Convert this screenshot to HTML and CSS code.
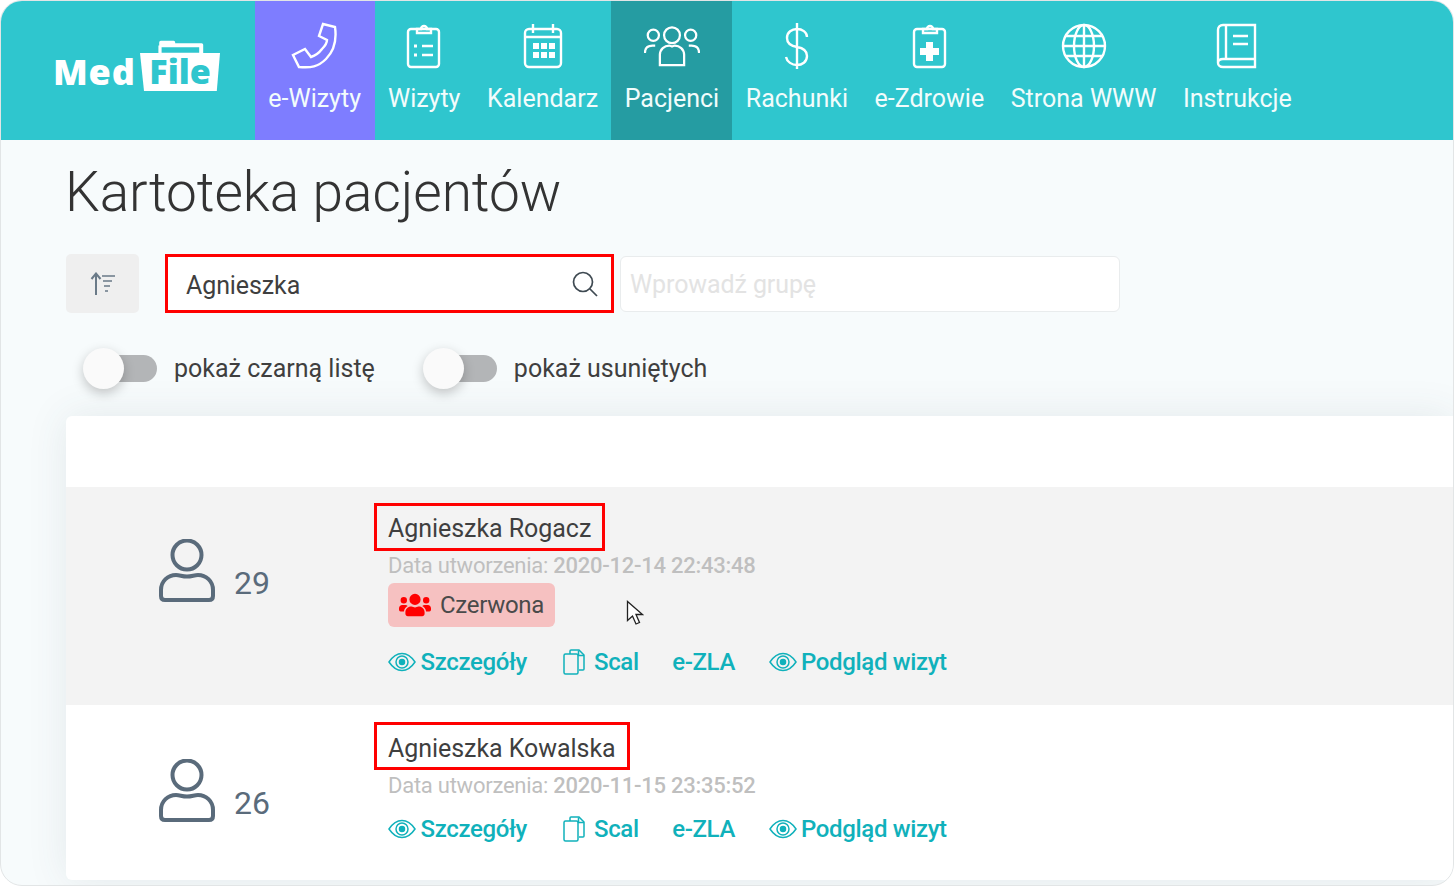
FILE: index.html
```html
<!DOCTYPE html>
<html lang="pl">
<head>
  <meta charset="UTF-8" />
  <meta name="viewport" content="width=device-width, initial-scale=1" />
  <title>Kartoteka pacjentów</title>
  <link rel="stylesheet" href="styles.css">
</head>
<body>
  <svg class="defs" width="0" height="0">
    <symbol id="eye" viewBox="0 0 28 20">
      <path d="M1 10C5 4 9 1.500 14 1.500S23 4 27 10c-4 6-8 8.500-13 8.500S5 16 1 10z" />
      <circle cx="14" cy="10" r="6" />
      <circle class="dot" cx="14" cy="10" r="2.500" fill="#10b1bb" />
    </symbol>
    <symbol id="copy" viewBox="0 0 22 26">
      <path d="M7 5V2a1 1 0 0 1 1-1h8l5 5v14a1 1 0 0 1-1 1h-4" />
      <path d="M15.500 1.500V6.500H21" />
      <rect x="1" y="5" width="14" height="20" rx="1.500" />
    </symbol>
    <symbol id="user" viewBox="0 0 58 64">
      <circle cx="29" cy="16" r="14.500" />
      <path d="M3 57V51c0-9 7-15 15-15 4 0 6 1.500 11 1.500S36 36 40 36c8 0 15 6 15 15v6q0 4-4 4H7q-4 0-4-4z" />
    </symbol>
  </svg>

  <div class="app">
    <header class="topbar">
      <a class="logo">
        <span class="logo-med">Med</span>
        <span class="logo-folder">
          <svg class="folder-tab" viewBox="0 0 68 20"><path d="M7 18V7h1V3q0-2 2-2h16q2 0 2 2v1h33q2 0 2 2v12zM11 9v7h47V9z" /></svg>
          <span class="logo-file">File</span>
        </span>
      </a>
      <nav class="menu">
        <a class="menu-item purple">
          <svg viewBox="0 0 48 48"><path d="M32 2l12 3c2 14-1 24-9 32S20 46 8 45L2 33l12-6 6 8c3-1 8-4 11-8 3-3 5-6 5-9l-8-4z" /></svg>
          <span>e-Wizyty</span>
        </a>
        <a class="menu-item">
          <svg viewBox="0 0 48 48"><rect x="8" y="7" width="31" height="38" rx="3" /><path d="M17 7h4a3 3 0 1 1 6 0h4v4H17zM22 24h11M22 33h11" /><path class="thick" d="M14 24h3M14 33h3" /></svg>
          <span>Wizyty</span>
        </a>
        <a class="menu-item">
          <svg viewBox="0 0 48 48"><rect x="6" y="7" width="36" height="38" rx="4" /><path d="M6 15h36M14 2v9M34 2v9" /><path class="fill" d="M14 21h6v6h-6zM22 21h6v6h-6zM30 21h6v6h-6zM14 30h6v6h-6zM22 30h6v6h-6zM30 30h6v6h-6z" /></svg>
          <span>Kalendarz</span>
        </a>
        <a class="menu-item dark">
          <svg class="wide" viewBox="0 -2 60 51"><circle cx="30" cy="12" r="8.500" /><circle cx="10" cy="12" r="6" /><circle cx="50" cy="12" r="6" /><path d="M1 31c0-5 3-8 8-8h3M59 31c0-5-3-8-8-8h-3M17 44V33c0-6 5-10 10-10 2 0 2 1 3 1s1-1 3-1c5 0 10 4 10 10v11z" /></svg>
          <span>Pacjenci</span>
        </a>
        <a class="menu-item">
          <svg viewBox="0 0 48 48"><path d="M34 15c0-5-5-8-10-8s-10 3-10 9c0 5 4 8 10 9 6 1 10 4 10 9 0 6-5 9-10 9s-10-3-11-8M24 1v46" /></svg>
          <span>Rachunki</span>
        </a>
        <a class="menu-item">
          <svg viewBox="0 0 48 48"><rect x="9" y="7" width="31" height="38" rx="3" /><path d="M18 7h4a3 3 0 1 1 6 0h4v4H18z" /><path class="fill" d="M21 20h7v6h6v7h-6v6h-7v-6h-6v-7h6z" /></svg>
          <span>e-Zdrowie</span>
        </a>
        <a class="menu-item">
          <svg viewBox="0 0 48 48"><circle cx="24" cy="24" r="21" /><ellipse cx="24" cy="24" rx="10" ry="21" /><path d="M24 3v42M3 24h42M6 14h36M6 34h36" /></svg>
          <span>Strona WWW</span>
        </a>
        <a class="menu-item">
          <svg viewBox="0 0 48 48"><path d="M10 3h32v34H10c-3 0-5 1.500-5 4V8c0-3 2-5 5-5zM13 3v34M5 41c0 2 2 4 5 4h32v-8" /><path d="M20 14h15M20 22h15" /></svg>
          <span>Instrukcje</span>
        </a>
      </nav>
    </header>

    <main class="content">
      <h1>Kartoteka pacjentów</h1>

      <div class="filters">
        <button class="sort-btn">
          <svg viewBox="0 0 26 24"><path d="M6 23V2M1.500 7L6 1.500 10.500 7" /><path class="thin" d="M12 4h13M13 9h9M14 14h6M15 19h3" /></svg>
        </button>
        <div class="search-box">
          <input class="search-input" type="text" value="Agnieszka" />
          <svg viewBox="0 0 26 26"><circle cx="11" cy="11" r="9.500" /><path d="M18 18l7 7" /></svg>
        </div>
        <input class="group-input" type="text" placeholder="Wprowadź grupę" />
      </div>

      <div class="toggles">
        <label class="toggle"><span class="switch"><span class="knob"></span></span>pokaż czarną listę</label>
        <label class="toggle"><span class="switch"><span class="knob"></span></span>pokaż usuniętych</label>
      </div>

      <section class="card">
        <div class="card-head"></div>

        <article class="patient striped">
          <div class="patient-age">
            <svg class="user-icon"><use href="#user" /></svg>
            <span>29</span>
          </div>
          <div class="patient-info">
            <div class="name">Agnieszka Rogacz</div>
            <div class="created">Data utworzenia: <b>2020-12-14 22:43:48</b></div>
            <div class="tag">
              <svg viewBox="0 0 640 512"><path d="M96 224a64 64 0 1 0 0-128 64 64 0 0 0 0 128zm448 0a64 64 0 1 0 0-128 64 64 0 0 0 0 128zm32 32h-64c-17.600 0-33.500 7.100-45.100 18.600 40.300 22.100 68.900 62 75.100 109.400h66c17.700 0 32-14.300 32-32v-32c0-35.300-28.700-64-64-64zm-256 0a112 112 0 1 0 0-224 112 112 0 0 0 0 224zm76.800 32h-8.300c-20.800 10-43.900 16-68.500 16s-47.600-6-68.500-16h-8.300C179.600 288 128 339.600 128 403.200V432c0 26.500 21.500 48 48 48h288c26.500 0 48-21.500 48-48v-28.800c0-63.600-51.600-115.200-115.200-115.200zm-223.700-13.400C161.500 263.100 145.600 256 128 256H64c-35.300 0-64 28.700-64 64v32c0 17.700 14.300 32 32 32h65.900c6.300-47.400 34.900-87.300 75.200-109.400z" /></svg>
              <span>Czerwona</span>
            </div>
            <div class="actions">
              <a class="action"><svg class="eye"><use href="#eye" /></svg>Szczegóły</a>
              <a class="action"><svg class="copy"><use href="#copy" /></svg>Scal</a>
              <a class="action">e-ZLA</a>
              <a class="action"><svg class="eye"><use href="#eye" /></svg>Podgląd wizyt</a>
            </div>
          </div>
          <svg class="cursor" viewBox="0 0 18 26"><path d="M1.500 1.500v19l5-4.500 3.500 8 3.500-1.500-3.500-8h6.500z" /></svg>
        </article>

        <article class="patient second">
          <div class="patient-age">
            <svg class="user-icon"><use href="#user" /></svg>
            <span>26</span>
          </div>
          <div class="patient-info">
            <div class="name">Agnieszka Kowalska</div>
            <div class="created">Data utworzenia: <b>2020-11-15 23:35:52</b></div>
            <div class="actions">
              <a class="action"><svg class="eye"><use href="#eye" /></svg>Szczegóły</a>
              <a class="action"><svg class="copy"><use href="#copy" /></svg>Scal</a>
              <a class="action">e-ZLA</a>
              <a class="action"><svg class="eye"><use href="#eye" /></svg>Podgląd wizyt</a>
            </div>
          </div>
        </article>
      </section>
    </main>
  </div>
</body>
</html>
```

FILE: styles.css
```css
* {
  box-sizing: border-box;
}

html, body {
  margin: 0;
  height: 100%;
  background: #fff;
}

body {
  font-family: Roboto, sans-serif;
  color: #3f3f3f;
  overflow: hidden;
}

.defs {
  position: absolute;
}

.app {
  height: 886px;
  border: 1px solid #e2e5e6;
  border-radius: 22px;
  overflow: hidden;
  background: #f7fbfc;
}

/* top bar */
.topbar {
  height: 139px;
  background: #2fc6ce;
  display: flex;
  align-items: stretch;
}

.logo {
  width: 254px;
  display: flex;
  align-items: flex-start;
  padding: 39px 0 0 52px;
  color: #fff;
  position: relative;
}

.logo-med {
  font-family: "Open Sans", sans-serif;
  font-weight: 800;
  font-size: 36px;
  letter-spacing: 0.8px;
  line-height: 1;
  margin-top: 14px;
}

.logo-folder {
  position: absolute;
  left: 139px;
  top: 39px;
  width: 82px;
  height: 52px;
}

.folder-tab {
  position: absolute;
  left: 0;
  top: 0;
  width: 80px;
  height: 16px;
  fill: #fff;
}

.logo-file {
  position: absolute;
  left: 0;
  top: 13px;
  width: 80px;
  height: 38px;
  background: #fff;
  color: #2fc6ce;
  font-family: "Open Sans", sans-serif;
  font-weight: 800;
  font-size: 34px;
  line-height: 36px;
  text-align: center;
  clip-path: polygon(0 0, 100% 0, 96% 100%, 5% 100%);
}

.menu {
  display: flex;
  align-items: stretch;
}

.menu-item {
  display: flex;
  flex-direction: column;
  align-items: center;
  padding: 21px 13.300px 0;
  color: #f2fcfc;
  font-size: 25px;
  font-weight: 400;
  white-space: nowrap;
}

.menu-item.purple {
  background: #7e7dff;
  padding-right: 13.700px;
}

.menu-item.dark {
  background: #259ca2;
}

.menu-item svg {
  width: 48px;
  height: 48px;
  margin-bottom: 14px;
  fill: none;
  stroke: #fff;
  stroke-width: 2.400;
}

.menu-item svg.wide {
  width: 56px;
}

.menu-item svg .fill,
.menu-item svg .thick {
  fill: #fff;
  stroke: none;
}

.menu-item svg .thick {
  stroke: #fff;
  stroke-width: 3;
}

/* page */
.content {
  padding: 0 0 0 65px;
}

h1 {
  margin: 0 0 0 -1px;
  padding-top: 22px;
  font-size: 55px;
  line-height: 60px;
  font-weight: 300;
  letter-spacing: -0.05px;
  color: #333;
}

.filters {
  display: flex;
  align-items: flex-start;
  margin-top: 32px;
  height: 60px;
}

.sort-btn {
  width: 73px;
  height: 59px;
  background: #efefef;
  border: 0;
  border-radius: 5px;
  padding: 0;
  display: flex;
  align-items: center;
  justify-content: center;
}

.sort-btn svg {
  width: 26px;
  height: 24px;
  fill: none;
  stroke: #6a7a88;
  stroke-width: 2;
}

.sort-btn svg .thin {
  stroke-width: 1.600;
}

.search-box {
  width: 449px;
  height: 59px;
  margin-left: 26px;
  border: 3px solid #f00;
  background: #fff;
  display: flex;
  align-items: center;
  padding: 0 13px 0 18px;
}

.search-box svg {
  width: 26px;
  height: 26px;
  flex: none;
  fill: none;
  stroke: #3f4a52;
  stroke-width: 1.700;
}

.search-input {
  flex: 1;
  min-width: 0;
  border: 0;
  outline: 0;
  padding: 3px 0 0;
  background: none;
  font: 400 25px Roboto, sans-serif;
  letter-spacing: -0.1px;
  color: #3f3f3f;
}

.group-input {
  width: 500px;
  height: 56px;
  margin: 2px 0 0 6px;
  border: 1px solid #e9eced;
  border-radius: 6px;
  background: #fff;
  padding: 0 9px;
  font: 400 25px Roboto, sans-serif;
  letter-spacing: -0.1px;
}

.group-input::placeholder {
  color: #e3e3e3;
  opacity: 1;
}

.toggles {
  display: flex;
  gap: 49px;
  margin: 34px 0 0 18px;
  height: 68px;
}

.toggle {
  display: flex;
  align-items: center;
  gap: 17px;
  height: 40px;
  font-size: 25px;
  color: #3f3f3f;
}

.switch {
  width: 73px;
  height: 27px;
  border-radius: 14px;
  background: #b3b5b7;
  position: relative;
}

.knob {
  position: absolute;
  left: -1px;
  top: -7px;
  width: 41px;
  height: 41px;
  border-radius: 50%;
  background: #fafafa;
  box-shadow: 0 4px 12px rgba(0, 0, 0, 0.22);
}

/* patient list */
.card {
  background: #fff;
  border-radius: 6px 0 0 6px;
  box-shadow: 0 0 40px rgba(60, 80, 90, 0.1);
  height: 464px;
}

.card-head {
  height: 71px;
}

.patient {
  display: flex;
  position: relative;
  padding-left: 92px;
}

.patient.striped {
  background: #f3f3f3;
  height: 218px;
}

.patient.second {
  padding-top: 2px;
}

.patient-age {
  width: 216px;
  display: flex;
  align-items: flex-start;
  padding-top: 52px;
  font-size: 32px;
  font-weight: 400;
  color: #5a6b7b;
}

.patient-age span {
  margin: 25px 0 0 18px;
  line-height: 38px;
}

.user-icon {
  width: 58px;
  height: 64px;
  flex: none;
  fill: none;
  stroke: #5a6b7b;
  stroke-width: 4;
}

.patient-info {
  padding-top: 16px;
}

.patient.second .patient-info {
  padding-top: 15px;
}

.name {
  display: table;
  height: 48px;
  padding: 4px 11px 0;
  border: 3px solid #f00;
  font-size: 25px;
  line-height: 38px;
  letter-spacing: -0.05px;
  color: #3f3f3f;
}

.patient.second .name {
  padding-top: 5px;
  line-height: 37px;
}

.created {
  margin: 0 0 0 14px;
  font-size: 22px;
  line-height: 30px;
  letter-spacing: -0.25px;
  color: #bfbfbf;
}

.patient.second .created {
  margin-top: 1px;
}

.created b {
  font-weight: 500;
}

.tag {
  display: inline-flex;
  align-items: center;
  gap: 9px;
  height: 44px;
  margin: 2px 0 0 14px;
  padding: 0 11px;
  background: #f6c1c1;
  border-radius: 6px;
  font-size: 24px;
  letter-spacing: -0.3px;
  color: #4a4a4a;
  vertical-align: top;
}

.tag svg {
  width: 32px;
  height: 26px;
  fill: #f00;
}

.actions {
  display: flex;
  align-items: center;
  gap: 33.500px;
  height: 30px;
  margin: 20px 0 0 14px;
  font-size: 24px;
  font-weight: 500;
  letter-spacing: -0.35px;
  color: #10b1bb;
}

.created + .actions {
  margin-top: 13px;
}

.action {
  display: flex;
  align-items: center;
  white-space: nowrap;
}

.action svg {
  fill: none;
  stroke: #10b1bb;
  stroke-width: 1.500;
  margin-right: 4.500px;
}

.action .eye {
  width: 28px;
  height: 20px;
}

.action .copy {
  width: 22px;
  height: 26px;
  margin: 0 9px 0 2.500px;
}

.cursor {
  position: absolute;
  left: 560px;
  top: 113px;
  width: 18px;
  height: 26px;
  fill: #fff;
  stroke: #222;
  stroke-width: 1.300;
}
```
